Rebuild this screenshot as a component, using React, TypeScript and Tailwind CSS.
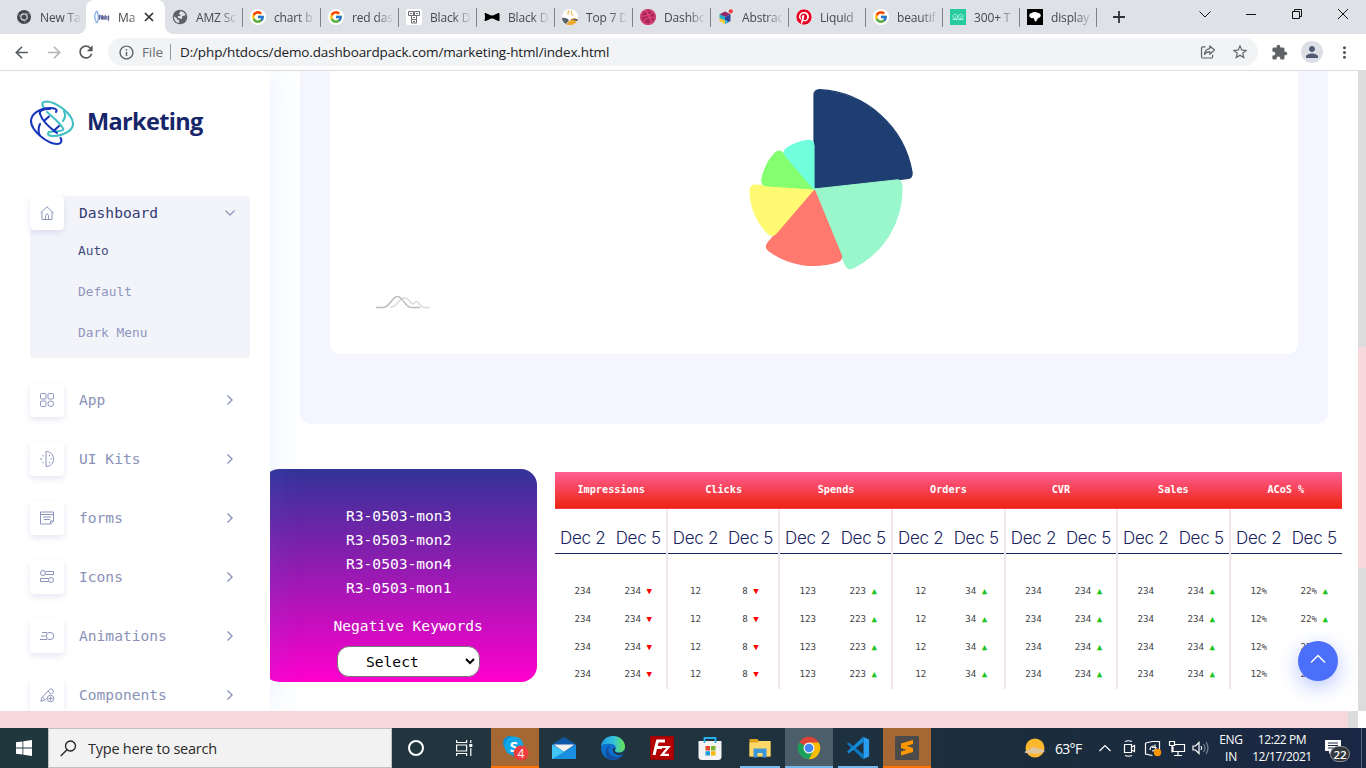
import React from "react";
import { FcGoogle } from "react-icons/fc";
import { FaDribbble, FaPinterest } from "react-icons/fa";
import {
  MdArrowBack,
  MdArrowForward,
  MdExtension,
  MdMoreVert,
  MdOutlineInfo,
  MdPerson,
  MdRefresh,
  MdStarBorder,
} from "react-icons/md";

/* ---------- Browser tabs ---------- */

const ChromeMono = () => (
  <svg width="16" height="16" viewBox="0 0 16 16" fill="none">
    <circle cx="8" cy="8" r="7" fill="#44474b" />
    <circle cx="8" cy="8" r="3.200" fill="#44474b" stroke="#dee1e6" strokeWidth="1.200" />
    <path d="M8 4.700h6M5.100 9.600 2.500 5M10.900 9.600 8.300 14" stroke="#8d9095" strokeWidth=".8" />
  </svg>
);
const MarketingFav = () => (
  <svg width="17" height="16" viewBox="0 0 17 16" fill="none">
    <path d="M3 1.500C.2 5 .2 10 3 14.500M3 1.500c2 4 2 9 0 13" stroke="#8fb4ea" strokeWidth="1.500" />
    <path d="M5.800 5.500v5.500M7.300 6l.7 4.500M9 6v5M10.500 7v4M12 6v5M13.700 7v4M15.500 6.500v5.500" stroke="#5d659a" strokeWidth="1.300" />
  </svg>
);
const Globe = () => (
  <svg width="16" height="16" viewBox="0 0 16 16">
    <circle cx="8" cy="8" r="7.300" fill="#5f6368" />
    <path d="M8 2.200c2.600-.2 4.800 1.300 5.600 3.600-.8 1.300-2.300.6-3.200 1.400-.9 1 .3 1.700-.5 2.500-1 .7-2-.6-3.200-.7-1.100-.1-1.500-1-.6-1.800.8-.7 2.300.3 2.600-.9.100-1-1.800-.5-1.700-1.700.1-.9 1.500-.9 1-2.400zM2 7.500c1.500.8 2.800 1.200 3 2.600.1 1 1.700.5 2.300 1.500.4 1-.5 1.500-.7 2.300C3.800 13.500 1.800 10.800 2 7.500z" fill="#dee1e6" />
  </svg>
);
const GoogleFav = () => (
  <span className="flex h-4 w-4 items-center justify-center rounded-full bg-white">
    <FcGoogle size={14} />
  </span>
);
const BoxesFav = () => (
  <svg width="16" height="16" viewBox="0 0 16 16" fill="none">
    <rect width="16" height="16" rx="2" fill="#fff" />
    <path d="M2.500 2.500h5v4h-5zM8.500 2.500h5v4h-5zM5.500 6.500h5v4h-5zM5.500 10.500h5v3.500h-5zM4 4.500h2M10 4.500h2M7 8.500h2M7 12.500h2" stroke="#6a6c71" strokeWidth="1" />
  </svg>
);
const BowFav = () => (
  <svg width="16" height="16" viewBox="0 0 16 16">
    <path d="M.5 4.500C1 3.500 2 4 5 5.500c1.500 1.200 4.500 1.200 6 0 3-1.500 4-2 4.500-1v7c-.5 1-1.500.5-4.500-1-1.500-1.200-4.500-1.200-6 0-3 1.500-4 2-4.500 1 .7-2 .7-5 0-7z" fill="#000" />
  </svg>
);
const PieFav = () => (
  <svg width="16" height="16" viewBox="0 0 16 16">
    <circle cx="8" cy="8" r="8" fill="#fff" />
    <path d="M0 9a8 8 0 0 0 4 6l3-3.500c-1-2-4-3-7-2.500z" fill="#55606b" />
    <path d="M4 15.200A8 8 0 0 0 15.500 11c-2-3-5-2.500-7 0z" fill="#eba932" />
    <path d="M8 10h7.800l-.5 2z" fill="#55606b" />
    <path d="M6 2v4M6 2h2M6 4h1.500M9.500 2v4h2" stroke="#f0b95e" fill="none" />
  </svg>
);
const HexFav = () => (
  <svg width="16" height="16" viewBox="0 0 16 16">
    <path d="m7 2.500 5.500 2.800L7 8 1.500 5.300z" fill="#8d2968" />
    <path d="M1.500 5.300 7 8v3.500l-5.500-2z" fill="#18afd2" />
    <path d="m1.500 9 5.500 2.500V15l-5.500-3z" fill="#ffc72c" />
    <path d="M12.500 5.300 7 8v7l5.500-3z" fill="#32459c" />
    <path d="M7 10.500v4.500l3.500-2z" fill="#28bdd5" />
    <circle cx="12.800" cy="2.300" r="2.100" fill="#fa3d3d" />
  </svg>
);
const GreenFav = () => (
  <svg width="16" height="16" viewBox="0 0 16 16" fill="none">
    <rect width="16" height="16" fill="#27cba0" />
    <path d="M2.500 10.500h11M3 8a2.300 2.300 0 1 1 4.500 0 2.300 2.300 0 0 1-4.500 0zM8.500 8A2.300 2.300 0 1 1 13 8a2.300 2.300 0 0 1-4.500 0z" stroke="#a5f5e2" strokeWidth="1" />
    <path d="M5 8h.8M10.300 8h.8" stroke="#fff" />
  </svg>
);
const CloudFav = () => (
  <svg width="16" height="16" viewBox="0 0 16 16">
    <rect width="16" height="16" fill="#000" />
    <path d="M2.300 7C2 5 3.500 4 5 4c1-1 4-1.300 5.500-.3 2 0 3.500 1.500 3.300 3-.1 1.300-1.500 2-2.600 2.200L9 12.500c-1 .3-1.500-.5-1.500-1.800L6.500 9C4.500 9.500 2.700 8.700 2.300 7z" fill="#fff" />
  </svg>
);

const tabs: { title: string; icon: React.ReactNode; active?: boolean }[] = [
  { title: "New Ta", icon: <ChromeMono /> },
  { title: "Ma", icon: <MarketingFav />, active: true },
  { title: "AMZ Sc", icon: <Globe /> },
  { title: "chart b", icon: <GoogleFav /> },
  { title: "red das", icon: <GoogleFav /> },
  { title: "Black D", icon: <BoxesFav /> },
  { title: "Black D", icon: <BowFav /> },
  { title: "Top 7 D", icon: <PieFav /> },
  { title: "Dashbo", icon: <FaDribbble size={16} className="rounded-full bg-[#a82858] text-[#e6447f]" /> },
  { title: "Abstrac", icon: <HexFav /> },
  { title: "Liquid", icon: <FaPinterest size={16} className="rounded-full bg-white text-[#e60023]" /> },
  { title: "beautif", icon: <GoogleFav /> },
  { title: "300+ T", icon: <GreenFav /> },
  { title: "display", icon: <CloudFav /> },
];

function TabStrip() {
  return (
    <div className="flex h-[34px] shrink-0 bg-[#dee1e6] pl-[9px]">
      {tabs.map((t, i) => (
        <div
          key={i}
          className={
            "relative flex items-center " +
            (t.active
              ? "-ml-px w-[79px] rounded-t-lg bg-white pl-[8px]"
              : i > 9
                ? "w-[77px] pl-[7px]"
                : i === 0
                  ? "w-[78px] pl-[7px]"
                  : "w-[78px] pl-[7px]")
          }
        >
          {t.active && (
            <>
              <span className="absolute -left-2 bottom-0 h-2 w-2 bg-[radial-gradient(circle_at_0_0,transparent_7.500px,#fff_8px)]" />
              <span className="absolute -right-2 bottom-0 h-2 w-2 bg-[radial-gradient(circle_at_100%_0,transparent_7.500px,#fff_8px)]" />
            </>
          )}
          <span className="flex w-4 shrink-0">{t.icon}</span>
          <span
            className={
              (t.active
                ? "w-[20px] [mask-image:linear-gradient(to_right,#000_60%,rgba(0,0,0,.4))] "
                : "w-[40px] [mask-image:linear-gradient(to_right,#000_60%,rgba(0,0,0,.15)_98%)] ") +
              "ml-2 whitespace-nowrap pt-px font-['Open_Sans',sans-serif] text-[12px] tracking-[-0.15px] text-[#45494d]"
            }
          >
            {t.title}
          </span>
          {t.active && (
            <svg className="ml-[6px]" width="10" height="10" viewBox="0 0 10 10">
              <path d="m1 1 8 8M9 1 1 9" stroke="#303236" strokeWidth="1.700" />
            </svg>
          )}
          {i > 1 && <span className="absolute right-0 top-[8px] h-[19px] w-px bg-[#808387]" />}
        </div>
      ))}
      <div className="flex w-[44px] items-center justify-center">
        <svg width="12" height="12" viewBox="0 0 12 12">
          <path d="M6 0v12M0 6h12" stroke="#303236" strokeWidth="1.800" />
        </svg>
      </div>
      <div className="ml-auto flex h-[28px] w-[184px] items-center">
        <svg width="184" height="28" viewBox="0 0 184 28" fill="none" stroke="#111">
          <path d="m17.500 11.500 5.500 5.500 5.500-5.500" />
          <path d="M64 14.500h10" />
          <path d="M110.500 11.500h7v7h-7zM112.500 11.500v-2h7v7h-2" />
          <path d="m156 9 10 10M166 9l-10 10" />
        </svg>
      </div>
    </div>
  );
}

function Toolbar() {
  return (
    <div className="flex h-[37px] shrink-0 items-center border-b border-[#d9dbde] bg-white pl-[12px]">
      <MdArrowBack size={19} className="text-[#55585c]" />
      <MdArrowForward size={19} className="ml-[14px] text-[#b3b5b8]" />
      <MdRefresh size={20} className="ml-[12px] text-[#55585c]" />
      <div className="ml-[12px] flex h-7 w-[1150px] items-center rounded-full bg-[#f1f3f4] pl-[10px] font-['Open_Sans',sans-serif] text-[14px]">
        <MdOutlineInfo size={17} className="text-[#5f6368]" />
        <span className="ml-[7px] w-[28px] pt-px text-[13.500px] tracking-[-0.1px] text-[#6b6f73]">File</span>
        <span className="h-4 w-px bg-[#96999d]" />
        <span className="ml-[9px] whitespace-nowrap text-[13.500px] tracking-[-0.140px] text-[#202124]">
          D:/php/htdocs/demo.dashboardpack.com/marketing-html/index.html
        </span>
        <svg className="ml-auto" width="16" height="16" viewBox="0 0 16 16" fill="none" stroke="#5f6368" strokeWidth="1.200">
          <path d="M5.500 2.800H3a1.500 1.500 0 0 0-1.500 1.500v8.200A1.500 1.500 0 0 0 3 14h8.200a1.500 1.500 0 0 0 1.500-1.500v-1.700" />
          <path d="M9.800 2v2.600C6.500 5 4.700 7 4.500 10.500c1.300-2 2.800-2.800 5.300-2.800v2.600L14.500 6z" strokeLinejoin="round" />
        </svg>
        <MdStarBorder size={18} className="ml-[15px] mr-[9px] text-[#5f6368]" />
      </div>
      <MdExtension size={17} className="ml-[13px] text-[#5f6368]" />
      <span className="ml-[13px] flex h-[22px] w-[22px] items-center justify-center rounded-full bg-[#dcdfe5]">
        <MdPerson size={18} className="text-[#4f5b73]" />
      </span>
      <MdMoreVert size={19} className="ml-[12px] text-[#55585c]" />
    </div>
  );
}

/* ---------- Sidebar ---------- */

const iconPaths: Record<string, React.ReactNode> = {
  home: <path d="M.5 7 7 .8 13.500 7M2 5.800v7.700h10V5.800M5.500 13.500V9.500q0-1.500 1.500-1.500t1.500 1.500v4" />,
  app: (
    <>
      <rect x=".5" y=".5" width="5.500" height="5.500" rx="1" />
      <rect x="8" y=".5" width="5.500" height="5.500" rx="1" />
      <rect x=".5" y="8" width="5.500" height="5.500" rx="1" />
      <circle cx="10.750" cy="10.750" r="2.800" />
    </>
  ),
  ui: (
    <>
      <path d="M6 -.5v15M6 -.5c10 0 10 15 0 15" />
      <path d="M2.500 3.500h1M.5 7h1.500M2.500 10.500h1M9 3.500h1M10.500 7h1M9 10.500h1" strokeWidth="1.300" />
    </>
  ),
  forms: <path d="M.5 1h13v9l-3 3H.5zM.5 3.500h13M3 6h8M4 8.500h6M10.500 13v-3h3" />,
  icons: (
    <>
      <circle cx="3" cy="3" r="2.500" />
      <path d="M5.500 1.500h8v3h-8M8.500 8.500h-8v3h8" />
      <circle cx="11" cy="10" r="2.500" />
    </>
  ),
  anim: (
    <>
      <circle cx="10" cy="7" r="3.700" />
      <path d="M2 3.500h5M1 7h4.500M0 10.500h7" />
    </>
  ),
  comp: (
    <>
      <path d="M.8 13.200 2 9.500 9.500 1.500q1.500-1.300 3 0t.5 3L11.500 6M.8 13.200l4-1 2-2M2.500 9l2.500 2.800M8 3l3 3" />
      <circle cx="10.500" cy="10.500" r="3.200" />
      <path d="M10.500 8.500v4M8.500 10.500h4" />
    </>
  ),
};

const IconBox = ({ name }: { name: string }) => (
  <span className="flex h-[34px] w-[34px] shrink-0 items-center justify-center rounded bg-white shadow-[0_3px_6px_rgba(60,80,170,0.13)]">
    <svg width="14" height="14" viewBox="0 0 14 14" fill="none" stroke="#8d94bb" strokeWidth="1" className="overflow-visible">
      {iconPaths[name]}
    </svg>
  </span>
);

const menu = [
  ["app", "App"],
  ["ui", "UI Kits"],
  ["forms", "forms"],
  ["icons", "Icons"],
  ["anim", "Animations"],
  ["comp", "Components"],
];

function Logo() {
  return (
    <svg width="44" height="46" viewBox="0 0 44 46" fill="none" strokeWidth="2.100" strokeLinecap="round">
      <g stroke="#42bfc4">
        <path d="M14 8C11 4 12 1.500 17 1.500 25 2 43 13 43 24 43 31 32 36 24 36 18 36 17 34 19 32c3-1 11 0 14-2 2-2-9-12-16-18" />
        <path d="M34 11.500c2 3 1 6.500-1 9.500" />
      </g>
      <g stroke="#1735bd">
        <path d="M26 12C28 9 24 8 20 8 10 8 1 14 1 21c0 10 17 23 26 23 5 0 5-4 3.500-6" />
        <path d="M20 9C12 9 9 11 10 14c2 6 10 14 17 19M10 24c-2 4-2 7-.5 11M15 20l4-3.500M23.500 31l5.500-5" />
      </g>
    </svg>
  );
}

function Sidebar() {
  return (
    <aside className="relative z-10 flex w-[270px] shrink-0 flex-col overflow-visible bg-white pl-[30px] pt-[29px] font-['DejaVu_Sans_Mono',monospace] text-[14.600px] shadow-[8px_0_28px_rgba(80,150,255,0.09)]">
      <div className="flex h-[46px] items-center">
        <Logo />
        <span className="ml-[13px] pb-[2px] font-['Open_Sans','Noto_Sans',sans-serif] text-[23.500px] font-bold tracking-[-0.650px] text-[#17256b]">
          Marketing
        </span>
      </div>
      <div className="mt-[50px] h-[162px] w-[220px] shrink-0 rounded bg-[#f3f4fa]">
        <div className="flex items-center">
          <IconBox name="home" />
          <span className="ml-[15px] text-[#343b72]">Dashboard</span>
          <svg className="ml-auto mr-[14px]" width="12" height="8" viewBox="0 0 12 8" fill="none">
            <path d="m1.500 1.500 4.500 4.500 4.500-4.500" stroke="#9298bc" strokeWidth="1.300" />
          </svg>
        </div>
        <div className="flex flex-col pl-12 text-[12.800px] leading-[41px] text-[#8e96bd]">
          <span className="text-[#444c7d]">Auto</span>
          <span>Default</span>
          <span>Dark Menu</span>
        </div>
      </div>
      <div className="mt-[25px] flex flex-col gap-[25px]">
        {menu.map(([icon, label]) => (
          <div key={label} className="flex w-[220px] items-center">
            <IconBox name={icon} />
            <span className="ml-[15px] text-[#8a91b7]">{label}</span>
            <svg className="ml-auto mr-[16px]" width="8" height="12" viewBox="0 0 8 12" fill="none">
              <path d="m1.500 1.500 4.500 4.500-4.500 4.500" stroke="#8d94bb" strokeWidth="1.400" />
            </svg>
          </div>
        ))}
      </div>
    </aside>
  );
}

/* ---------- Rose chart ---------- */

const slices = [
  { from: 0, to: 83.7, r: 99.5, color: "#1e3d71" },
  { from: 83.7, to: 157.6, r: 88, color: "#9af6cb" },
  { from: 157.6, to: 220.6, r: 76.5, color: "#ff796f" },
  { from: 220.6, to: 273.9, r: 64, color: "#fffa72" },
  { from: 273.9, to: 319.3, r: 53, color: "#85ff70" },
  { from: 319.3, to: 360, r: 49, color: "#70ffdd" },
];

function slicePath(from: number, to: number, r: number) {
  const c = 6;
  const pt = (deg: number, rad: number) => {
    const a = (deg * Math.PI) / 180;
    return `${(Math.sin(a) * rad).toFixed(2)} ${(-Math.cos(a) * rad).toFixed(2)}`;
  };
  const d = ((c / r) * 180) / Math.PI;
  return `M0 0L${pt(from, r - c)}Q${pt(from, r)} ${pt(from + d, r)}A${r} ${r} 0 0 1 ${pt(to - d, r)}Q${pt(to, r)} ${pt(to, r - c)}Z`;
}

function RoseChart() {
  return (
    <svg width="968" height="282" viewBox="330 71 968 282" fill="none">
      <g transform="translate(814 189)">
        {slices.map((s) => (
          <path key={s.color} d={slicePath(s.from, s.to, s.r)} fill={s.color} stroke={s.color} strokeWidth="1.200" />
        ))}
      </g>
      <path d="M390 307.500c7 0 9-9.500 14.500-9.500 5 0 6 6 8 6s2-2.500 4-2.500c2.500 0 4 6 7 6H430" stroke="#dcdcdc" strokeWidth="1.600" />
      <path d="M376 307.500h7c7 0 9-11 14.500-11s7 11 14.500 11h8" stroke="#bdbdbd" strokeWidth="1.600" />
    </svg>
  );
}

/* ---------- Campaign card and table ---------- */

function CampaignCard() {
  return (
    <div className="-ml-[7px] mt-[45px] flex h-[213px] w-[274px] shrink-0 flex-col rounded-2xl bg-[linear-gradient(to_bottom,#333399,#ff00cc)] pt-[35px] font-['DejaVu_Sans_Mono',monospace] text-[14.600px] leading-6 text-white">
      <div className="flex flex-col pl-[83px]">
        {["mon3", "mon2", "mon4", "mon1"].map((m) => (
          <span key={m}>R3-0503-{m}</span>
        ))}
      </div>
      <span className="mt-[14px] pl-[70.500px]">Negative Keywords</span>
      <div className="ml-[74px] mt-[8px] flex h-[31px] w-[143px] shrink-0 items-center justify-between rounded-xl border border-[#767676] bg-white pl-7 pr-[4px] text-black">
        <span>Select</span>
        <svg width="10" height="7" viewBox="0 0 10 7" fill="none">
          <path d="m1 1 4 4 4-4" stroke="#000" strokeWidth="2" />
        </svg>
      </div>
    </div>
  );
}

const metrics = [
  { name: "Impressions", a: "234", b: "234", up: false },
  { name: "Clicks", a: "12", b: "8", up: false },
  { name: "Spends", a: "123", b: "223", up: true },
  { name: "Orders", a: "12", b: "34", up: true },
  { name: "CVR", a: "234", b: "234", up: true },
  { name: "Sales", a: "234", b: "234", up: true },
  { name: "ACoS %", a: "12%", b: "22%", up: true },
];

function MetricsTable() {
  return (
    <div className="ml-[18px] mt-[48px] w-[787px] shrink-0 font-['DejaVu_Sans_Mono',monospace]">
      <div className="grid h-[37px] grid-cols-7 border-b border-[#f5384f] bg-[linear-gradient(to_bottom,#ff5e95,#ed2410)] text-center text-[10.200px] font-bold leading-[35px] text-white">
        {metrics.map((m) => (
          <span key={m.name}>{m.name}</span>
        ))}
      </div>
      <div className="grid grid-cols-[113px_112px_113px_113px_112px_113px_111px]">
        {metrics.map((m, i) => (
          <div key={m.name} className={i < 6 ? "h-[180px] border-r-2 border-[#f0e8e8]" : "h-[180px]"}>
            <div className="grid h-[45px] grid-cols-2 whitespace-nowrap border-b border-[#1a2360] pt-[16px] text-center font-['Inter',sans-serif] text-[17px] font-light leading-[26px] tracking-[-0.250px] text-[#17225f]">
              <span>Dec 2</span>
              <span>Dec 5</span>
            </div>
            <div className="pt-[23px]">
              {[0, 1, 2, 3].map((r) => (
                <div key={r} className="grid h-[27.800px] grid-cols-2 whitespace-pre text-center text-[9.130px] leading-[28px] text-[#404245]">
                  <span>{m.a}</span>
                  <span>
                    {m.b} <span className={m.up ? "text-[#1fc41f]" : "text-[#ff0000]"}>{m.up ? "▲" : "▼"}</span>
                  </span>
                </div>
              ))}
            </div>
          </div>
        ))}
      </div>
    </div>
  );
}

/* ---------- Windows taskbar ---------- */

const Skype = () => (
  <svg width="28" height="28" viewBox="0 0 28 28" className="mt-[2px]">
    <circle cx="9" cy="8" r="7" fill="#0590d8" />
    <circle cx="16" cy="15" r="7" fill="#0590d8" />
    <circle cx="13" cy="11" r="9.500" fill="#12a8e8" />
    <text x="13" y="16.500" textAnchor="middle" fill="#fff" fontFamily="Open Sans" fontWeight="700" fontSize="15">S</text>
    <circle cx="20" cy="18" r="7.500" fill="#ee3d3d" />
    <text x="20" y="22.500" textAnchor="middle" fill="#fff" fontFamily="Open Sans" fontSize="12">4</text>
  </svg>
);
const Mail = () => (
  <svg width="24" height="24" viewBox="0 0 24 24">
    <path d="M0 8.500 12 1l12 7.500V12H0z" fill="#0b59a8" />
    <path d="M1.500 8.500h21L12 16z" fill="#f2f2f2" />
    <path d="M0 8.500 24 23H0z" fill="#35bdf4" />
    <path d="M24 8.500 0 23h24z" fill="#1a8fe0" />
    <path d="M0 8.500v14.500l12-7.300z" fill="#41c5f7" />
  </svg>
);
const Edge = () => (
  <svg width="24" height="24" viewBox="0 0 24 24">
    <defs>
      <linearGradient id="edgeTop" x1="0" x2="1">
        <stop offset="0" stopColor="#1b9de2" />
        <stop offset=".55" stopColor="#36c4d8" />
        <stop offset="1" stopColor="#6ae54a" />
      </linearGradient>
    </defs>
    <circle cx="12" cy="12" r="12" fill="#0d6fcb" />
    <path d="M0 10C1 4 6 0 12 0c7 0 12 5 12 10.500 0 4-3 6-6.500 6-2.500 0-4.500-1-3-3 1-2 0-5-4-5.500C6 7.500 1.500 8 0 10z" fill="url(#edgeTop)" />
    <path d="M10.500 8.500C7 10 6.500 15 9 18c3 3.500 8.500 4 13 .5C19 23 13 25 8 23 3 21 3 11 10.500 8.500z" fill="#124f9f" />
    <path d="M14.500 12c-2 3 0 5 4 4.800 2.500-.2 4.300-1.500 5.500-3.800 0 2.500-.5 4-2 5.500-5 1.500-10-.5-10-4.500 0-1.500 1-2.500 2.500-2z" fill="#20353f" />
  </svg>
);
const FileZilla = () => (
  <svg width="24" height="24" viewBox="0 0 24 24">
    <rect width="24" height="24" fill="#b40000" />
    <rect x=".5" y=".5" width="23" height="23" fill="none" stroke="#710b10" strokeDasharray="1 1" />
    <path d="M4 19 7.500 5H15M6 11.500h6" stroke="#fff" strokeWidth="3" fill="none" />
    <path d="M12 11h6.500L12 18.800h7" stroke="#fff" strokeWidth="2.200" fill="none" />
  </svg>
);
const Store = () => (
  <svg width="24" height="24" viewBox="0 0 24 24" className="mr-[2px]">
    <path d="M.5 5h23v15.500q0 3.500-3.500 3.500H4q-3.500 0-3.500-3.500z" fill="#f4f4f4" />
    <path d="M6.500 7V2h11v5" stroke="#2ab0ea" strokeWidth="1.800" fill="none" />
    <path d="M7.500 10H12v4.500H7.500z" fill="#e5482d" />
    <path d="M13 10h4.500v4.500H13z" fill="#7bb62e" />
    <path d="M7.500 15.200H12V19.500H7.500z" fill="#1f9ddb" />
    <path d="M13 15.200h4.500v4.300H13z" fill="#fcb613" />
  </svg>
);
const Explorer = () => (
  <svg width="24" height="24" viewBox="0 0 24 24">
    <path d="M1.500 3h8l1.500 2H22.500v15.500h-21z" fill="#dfa01a" />
    <path d="M1.500 6.500h8l1.500-1.500H22.500v15.500h-21z" fill="#ffd869" />
    <path d="M5.500 21.500v-9h13v9h-4V17h-5v4.500z" fill="#3c96dc" />
  </svg>
);
const ChromeIcon = () => (
  <svg width="24" height="24" viewBox="0 0 24 24">
    <path d="M12 12 2.300 6.400A11.200 11.200 0 0 1 21.700 6.400z" fill="#db4437" />
    <path d="M12 12 21.700 6.400A11.200 11.200 0 0 1 12 23.200z" fill="#fbbc05" />
    <path d="M12 12V23.200A11.200 11.200 0 0 1 2.300 6.400z" fill="#1da05a" />
    <path d="M12 6.500h9.700L17 14.500z" fill="#fbbc05" />
    <path d="m7 14.500 5 8.700 4.500-8z" fill="#1da05a" />
    <path d="M16.800 14.800 12 23.200c4 0 7.500-2 9.700-5.600z" fill="#fbbc05" />
    <circle cx="12" cy="12" r="5.500" fill="#f2f2f2" />
    <circle cx="12" cy="12" r="4.300" fill="#4285f4" />
  </svg>
);
const Code = () => (
  <svg width="24" height="24" viewBox="0 0 26 26">
    <path d="M1 8.500 3 7l16 13v5.500z" fill="#0b78c4" />
    <path d="M1 17 3 19 19 6.500V.5z" fill="#1189d6" />
    <path d="m19 1 6 2.700v18.600L19 25z" fill="#2a9df0" />
  </svg>
);
const Sublime = () => (
  <svg width="24" height="24" viewBox="0 0 24 24">
    <rect width="24" height="24" rx="1.500" fill="#4b4b4b" />
    <path d="M6 7.500 18 4v4L6 11.500zM6 8l12 4v4L6 12zM6 15.500 18 12v4L6 19.500z" fill="#ff9800" />
  </svg>
);

const apps: { icon: React.ReactNode; cell: string }[] = [
  { icon: <Skype />, cell: "w-12 bg-[#a56733] border-[#ff7300]" },
  { icon: <Mail />, cell: "w-12 border-transparent" },
  { icon: <Edge />, cell: "w-12 border-transparent" },
  { icon: <FileZilla />, cell: "w-12 border-transparent" },
  { icon: <Store />, cell: "w-12 border-transparent" },
  { icon: <Explorer />, cell: "mx-[4px] w-[40px] border-[#76b9ed]" },
  { icon: <ChromeIcon />, cell: "w-12 bg-[#4d5e6b] border-[#76b9ed]" },
  { icon: <Code />, cell: "mx-[4px] w-[40px] border-[#76b9ed]" },
  { icon: <Sublime />, cell: "w-12 bg-[#a56733] border-[#ff7300]" },
];

function Taskbar() {
  return (
    <div className="flex h-10 shrink-0 bg-[linear-gradient(to_right,#21373e,#20343f_50%,#1b2d3c_75%,#1a2744)] font-['Open_Sans',sans-serif] text-white">
      <div className="flex w-12 items-center justify-center">
        <svg width="16" height="16" viewBox="0 0 16 16" fill="#fff">
          <path d="M0 2.300 6.500 1.400v6.200H0zM7.300 1.300 16 0v7.600H7.300zM0 8.400h6.500v6.200L0 13.700zM7.300 8.400H16V16l-8.700-1.300z" />
        </svg>
      </div>
      <div className="flex w-[344px] items-center border border-[#bfc1c2] bg-[#f2f2f2] pl-[11px]">
        <svg width="17" height="17" viewBox="0 0 17 17" fill="none" stroke="#222" strokeWidth="1.300">
          <circle cx="10.500" cy="6" r="5" />
          <path d="M7 9.700.7 16" />
        </svg>
        <span className="ml-[11px] pt-[2px] text-[14.500px] tracking-[-0.240px] text-[#2a2a2a]">Type here to search</span>
      </div>
      <div className="flex w-12 items-center justify-center">
        <span className="h-4 w-4 rounded-full border-2 border-white" />
      </div>
      <div className="flex w-12 items-center justify-center">
        <svg width="17" height="16" viewBox="0 0 17 16" fill="none" stroke="#fff" strokeWidth="1.200">
          <path d="M.6 0v2.500h10V0M.6 16v-2.500h10V16M.6 5h10v6H.6zM14.800 0v3M14.800 8v8" />
          <path d="M13.300 4h3v3h-3z" fill="#fff" stroke="none" />
        </svg>
      </div>
      <div className="ml-[3px] flex gap-px">
        {apps.map((a, i) => (
          <div key={i} className={"flex items-center justify-center border-b-2 pt-[2px] " + a.cell}>
            {a.icon}
          </div>
        ))}
      </div>
      <div className="ml-auto flex items-center text-[12px]">
        <svg width="22" height="20" viewBox="0 0 22 20">
          <circle cx="11" cy="10" r="9.500" fill="#fdb92e" />
          <path d="M1 15c-1-2.500 3-3 4.500-3C7 8.500 12 8 13.500 11c3-.8 6 .3 7.500 2.500-3 .5-4 2-7 2z" fill="#dcc6ae" fillOpacity=".9" />
        </svg>
        <span className="ml-[9px] w-[44px] pt-px text-[14px] tracking-[-0.700px]">63°F</span>
        <svg width="120" height="20" viewBox="1098 738 120 20" fill="none" stroke="#fff" strokeWidth="1.200">
          <path d="m1098.500 751 5.500-5.500 5.500 5.500" />
          <path d="M1123.500 744.500h7v8h-7zM1130.500 747l3-1.500v6l-3-1.500M1124 741.500q3.500-1.500 7 0M1124 755.500q3.500 1.500 7 0" />
          <path d="m1144.500 743 7-1.500h7v8M1144.500 743v11l7 1.500M1149 750q0-4 4-4M1154 744.500v3h-3M1155 747q0 4-4 4" />
          <circle cx="1156.500" cy="752.500" r="3.700" fill="#ff9500" stroke="none" />
          <path d="M1174 744.500h9.500v7H1172v-5M1177 751.500v3.500M1173 755.500h8M1168.500 741.500h5v4h-5zM1171 745.500v7" />
          <path d="M1192 746h2.500l3.500-3.500v11l-3.500-3.500h-2.500z" />
          <path d="M1200 746q1.500 2 0 4" />
          <path d="M1202.500 744q3 4 0 8M1205 742q4 6 0 12" stroke="#7c8799" />
        </svg>
        <div className="flex w-[24px] flex-col items-center leading-[17px] tracking-[-0.3px]">
          <span>ENG</span>
          <span>IN</span>
        </div>
        <div className="ml-[8px] flex w-[62px] flex-col items-center whitespace-nowrap leading-[17px] tracking-[-0.4px]">
          <span>12:22 PM</span>
          <span>12/17/2021</span>
        </div>
        <svg className="ml-[11px]" width="28" height="28" viewBox="0 0 28 28">
          <path d="M1 6h16v11H8l-3 3v-3H1z" fill="#fff" />
          <path d="M4 9h10M4 11.500h10M4 14h10" stroke="#1a2a42" />
          <rect x="6.500" y="13.500" width="19" height="15" rx="7.500" fill="#34383d" stroke="#8b8f93" transform="translate(0 -1)" />
          <text x="16" y="24.500" textAnchor="middle" fill="#fff" fontFamily="Open Sans" fontWeight="600" fontSize="11.500">22</text>
        </svg>
        <span className="ml-[9px] mr-[4px] h-10 w-px bg-[#59657a]" />
      </div>
    </div>
  );
}

export default function App() {
  return (
    <div className="flex h-[768px] w-[1366px] flex-col overflow-hidden bg-white">
      <TabStrip />
      <Toolbar />
      <div className="flex h-[640px] shrink-0 overflow-hidden">
        <Sidebar />
        <main className="relative w-[1088px] shrink-0 overflow-hidden">
          <section className="ml-[30px] h-[353px] w-[1028px] rounded-b-[10px] bg-[#f5f5ff] px-[30px]">
            <div className="h-[282.500px] overflow-hidden rounded-b-[10px] bg-white">
              <RoseChart />
            </div>
          </section>
          <div className="flex">
            <CampaignCard />
            <MetricsTable />
          </div>
          <button className="absolute bottom-[30px] right-[20px] flex h-10 w-10 items-center justify-center rounded-full bg-[#4b6ffa] shadow-[0_6px_20px_rgba(75,111,250,0.4)]">
            <svg width="16" height="10" viewBox="0 0 16 10" fill="none" className="mb-[4px]">
              <path d="m1 8.500 7-7 7 7" stroke="#fff" strokeWidth="1.500" />
            </svg>
          </button>
        </main>
        <div className="flex w-2 flex-col bg-[#f8d9db]">
          <div className="h-[276px] bg-[#dcdcdc]" />
          <div className="mt-auto h-[143px] bg-[#dcdcdc]" />
        </div>
      </div>
      <div className="flex h-[17px] shrink-0">
        <div className="w-[1348px] bg-[#f8d9db]" />
        <div className="w-[10px] bg-[#dcdcdc]" />
      </div>
      <Taskbar />
    </div>
  );
}
